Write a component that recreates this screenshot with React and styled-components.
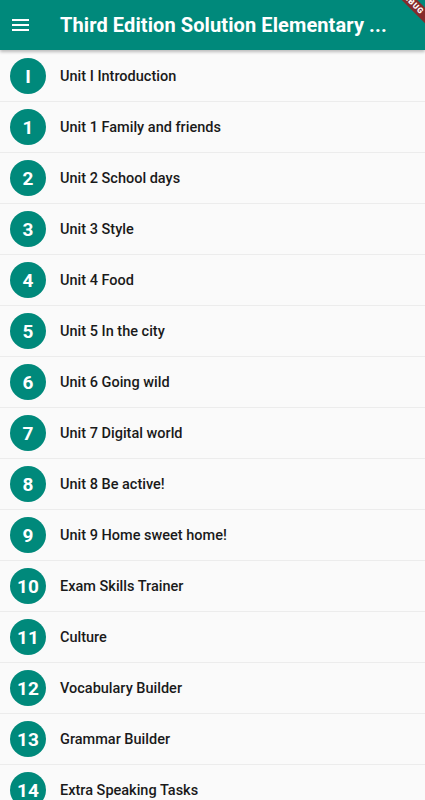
import React from 'react';
import styled, { createGlobalStyle } from 'styled-components';

const GlobalStyle = createGlobalStyle`
  html, body {
    margin: 0;
    padding: 0;
    background: #fafafa;
    font-family: Roboto, 'Noto Sans', sans-serif;
  }
`;

const Page = styled.div`
  width: 425px;
  height: 800px;
  overflow: hidden;
  position: relative;
  background: #fafafa;
`;

const AppBar = styled.header`
  height: 50px;
  display: flex;
  align-items: center;
  background: #00897b;
  color: #fff;
  box-shadow: 0 2px 3px rgba(0, 0, 0, 0.25);
  position: relative;
  z-index: 2;
`;

const MenuButton = styled.div`
  width: 60px;
  height: 50px;
  display: flex;
  flex-direction: column;
  justify-content: center;
  gap: 3px;
  padding-left: 12px;
  box-sizing: border-box;

  span {
    display: block;
    width: 17px;
    height: 2px;
    background: #fff;
  }
`;

const Title = styled.h1`
  margin: 0;
  font-size: 20px;
  font-weight: 700;
  white-space: nowrap;
  letter-spacing: 0.1px;
`;

// flutter debug ribbon in the corner
const DebugBanner = styled.div`
  position: absolute;
  top: -3px;
  left: 372px;
  width: 80px;
  height: 11px;
  background: #852b2b;
  color: #fff;
  font-size: 8px;
  font-weight: 900;
  line-height: 11px;
  text-align: center;
  letter-spacing: 0.8px;
  transform: rotate(45deg);
  z-index: 3;
`;

const List = styled.ul`
  list-style: none;
  margin: 0;
  padding: 1px 0 0;
`;

const Row = styled.li`
  height: 50px;
  display: flex;
  align-items: center;
  border-bottom: 1px solid #ececec;
`;

const Badge = styled.div`
  width: 36px;
  height: 36px;
  margin-left: 10px;
  margin-right: 14px;
  border-radius: 50%;
  background: #00897b;
  color: #fff;
  display: flex;
  align-items: center;
  justify-content: center;
  font-size: 19px;
  font-weight: 700;
  flex-shrink: 0;
`;

const Label = styled.span`
  font-size: 14.5px;
  font-weight: 500;
  color: #1a1a1a;
`;

const units = [
  ['I', 'Unit I Introduction'],
  ['1', 'Unit 1 Family and friends'],
  ['2', 'Unit 2 School days'],
  ['3', 'Unit 3 Style'],
  ['4', 'Unit 4 Food'],
  ['5', 'Unit 5 In the city'],
  ['6', 'Unit 6 Going wild'],
  ['7', 'Unit 7 Digital world'],
  ['8', 'Unit 8 Be active!'],
  ['9', 'Unit 9 Home sweet home!'],
  ['10', 'Exam Skills Trainer'],
  ['11', 'Culture'],
  ['12', 'Vocabulary Builder'],
  ['13', 'Grammar Builder'],
  ['14', 'Extra Speaking Tasks'],
];

export default function App() {
  return (
    <Page>
      <GlobalStyle />
      <AppBar>
        <MenuButton>
          <span />
          <span />
          <span />
        </MenuButton>
        <Title>Third Edition Solution Elementary ...</Title>
      </AppBar>
      <DebugBanner>DEBUG</DebugBanner>
      <List>
        {units.map(([num, name]) => (
          <Row key={name}>
            <Badge>{num}</Badge>
            <Label>{name}</Label>
          </Row>
        ))}
      </List>
    </Page>
  );
}
